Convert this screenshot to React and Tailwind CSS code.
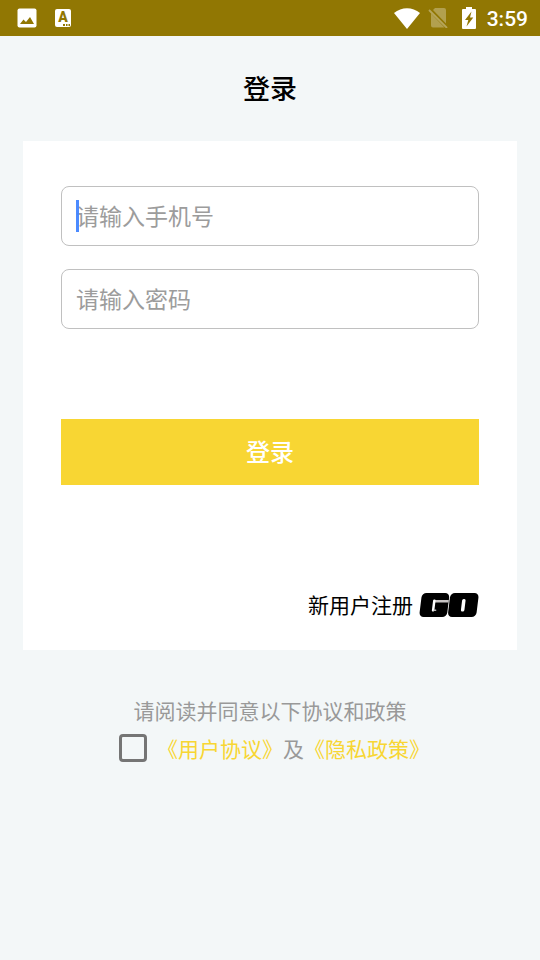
import React, { useState } from 'react';

const StatusBar = () => {
  return (
    <header className="h-9 pl-4 pr-3 flex items-center justify-between bg-[#917703] text-white">
      <div className="flex items-center gap-[18px]">
        {/* Gallery */}
        <svg className="w-5 h-5 ml-px" viewBox="0 0 20 20" aria-hidden="true">
          <rect x="0.5" y="0.5" width="19" height="19" rx="2" fill="#fff" />
          <path d="M3 16 6.5 11.5 9 14 13 9 17 16Z" fill="#917703" />
        </svg>
        {/* Keyboard */}
        <div className="w-4 h-[18px] rounded-xs bg-white text-[#917703] flex flex-col items-center relative">
          <span className="font-['Roboto',sans-serif] font-black text-sm leading-4">A</span>
          <svg className="absolute right-0 bottom-0 w-2 h-1" viewBox="0 0 8 4" aria-hidden="true">
            <path d="M0 1h2v2H0ZM3 1h1.5v2H3ZM5.500 1H7v2H5.500Z" fill="#917703" />
          </svg>
        </div>
      </div>

      <div className="flex items-center">
        <svg className="w-[26px] h-[21px]" viewBox="0 0 26 21" aria-hidden="true">
          <path d="M0 5C7.500-1.300 18.500-1.300 26 5L13 21Z" fill="#fff" />
        </svg>
        <svg className="w-5 h-5 ml-2" viewBox="0 0 20 20" aria-hidden="true">
          <path d="M7 0H16Q18 0 18 2V15.500L5 2ZM3 5.500 16.500 19.500H5Q3 19.500 3 17.500Z" fill="#fff" opacity="0.3" />
          <path d="M1 2 19 20" stroke="#fff" strokeWidth="1.800" opacity="0.35" />
        </svg>
        <svg className="w-[14px] h-[22px] ml-[14px]" viewBox="0 0 14 22" aria-hidden="true">
          <path d="M4 0H10V2H13Q14 2 14 3V21Q14 22 13 22H1Q0 22 0 21V3Q0 2 1 2H4Z" fill="#fff" />
          <path d="M9.500 4.500 3 13H6.300L4.500 19.500 11.300 10.500H8Z" fill="#917703" />
        </svg>
        <span className="pt-px ml-[11px] font-['Roboto',sans-serif] font-medium text-[21px] leading-9">3:59</span>
      </div>
    </header>
  );
};

// Two slanted tiles with narrow cut-outs
const GoLogo = () => {
  return (
    <svg className="w-[60px] h-6" viewBox="0 0 60 24" role="img" aria-label="GO">
      <g transform="translate(3 0) skewX(-7)">
        <rect x="0" y="0" width="27.700" height="24" rx="4.500" fill="#000" />
        <rect x="28.500" y="0" width="28.500" height="24" rx="4.500" fill="#000" />
        <rect x="13.500" y="7" width="14.200" height="2.500" fill="#c9c5c5" />
        <rect x="12" y="6.500" width="2.500" height="12" rx="1" fill="#fff" />
        <rect x="13.500" y="16.500" width="3" height="1.500" rx="0.7" fill="#bbb" />
        <rect x="41" y="6" width="3.500" height="12.500" rx="1.500" fill="#fff" />
      </g>
    </svg>
  );
};

const Field = ({ id, label, type, value, onChange, showCaret }) => {
  return (
    <div className="relative">
      <input
        id={id}
        type={type}
        value={value}
        onChange={(e) => onChange(e.target.value)}
        placeholder={label}
        aria-label={label}
        className="block w-full h-15 px-[14px] pb-[2px] rounded-lg border border-[#c0c0c0] bg-white text-[23px] text-black placeholder:text-[#9c9c9c] outline-none"
      />
      {showCaret && !value && (
        <span className="absolute left-[15px] top-[14px] w-[3px] h-8 bg-[#4285ff]/95"></span>
      )}
    </div>
  );
};

const App = () => {
  const [phone, setPhone] = useState('');
  const [password, setPassword] = useState('');
  const [agreed, setAgreed] = useState(false);

  return (
    <div className="min-h-screen bg-[#f3f7f8] font-['Noto_Sans_CJK_SC',sans-serif]">
      <StatusBar />

      <h1 className="h-[105px] flex items-center justify-center text-[27px] font-medium text-black">
        登录
      </h1>

      {/* Login form */}
      <form
        onSubmit={(e) => e.preventDefault()}
        className="mx-[23px] px-[38px] pt-[45px] pb-[29px] bg-white"
      >
        <div className="flex flex-col gap-[23px]">
          <Field id="phone" label="请输入手机号" type="tel" value={phone} onChange={setPhone} showCaret />
          <Field id="password" label="请输入密码" type="password" value={password} onChange={setPassword} />
        </div>

        <button
          type="submit"
          className="mt-[90px] w-full h-[66px] pb-[2px] bg-[#f8d633] text-2xl font-medium text-white"
        >
          登录
        </button>

        <div className="mt-[104px] flex justify-end">
          <a href="#register" className="h-8 flex items-center gap-[6px] text-[21px] text-black">
            新用户注册
            <GoLogo />
          </a>
        </div>
      </form>

      {/* Agreement */}
      <div className="mt-[41px] flex flex-col items-center text-[21px] leading-[38px] text-[#999999]">
        <p>请阅读并同意以下协议和政策</p>
        <div className="pl-[9px] flex items-center gap-[10px]">
          <input
            id="agree"
            type="checkbox"
            aria-label="同意"
            checked={agreed}
            onChange={(e) => setAgreed(e.target.checked)}
            className="appearance-none w-7 h-7 rounded-sm border-3 border-[#757575] checked:bg-[#f8d633]"
          />
          <p>
            <a href="#terms" className="text-[#f8d633]">《用户协议》</a>
            及
            <a href="#privacy" className="text-[#f8d633]">《隐私政策》</a>
          </p>
        </div>
      </div>
    </div>
  );
};

export default App;
